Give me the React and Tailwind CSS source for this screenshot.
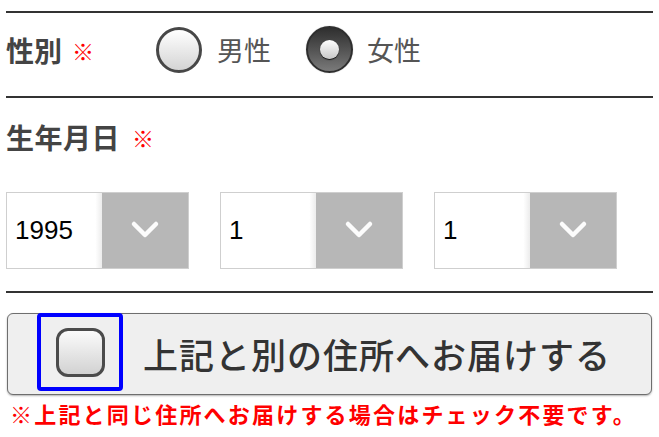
import React from "react";

const JP = { fontFamily: '"Noto Sans CJK JP", "Noto Sans", sans-serif' };

function Select({ value }) {
  return (
    <div className="flex w-[183px] h-[77px] border border-[#cfcfcf] bg-white">
      <div className="flex-1 flex items-center pl-[8px] text-[26px] text-black bg-linear-to-r from-white from-93% to-[#ececec]" style={{ fontFamily: '"Liberation Sans", Arial, sans-serif' }}>
        {value}
      </div>
      <div className="w-[86px] h-full bg-[#b7b7b7] flex items-center justify-center">
        <svg width="30" height="22" viewBox="0 0 30 22" className="mt-[-3px]">
          <polyline points="4,6 15,17 26,6" fill="none" stroke="#fff" strokeWidth="4.5" strokeLinecap="round" strokeLinejoin="round" opacity="0.95" />
        </svg>
      </div>
    </div>
  );
}

export default function App() {
  return (
    <div className="w-[659px] h-[437px] bg-white px-[6px] pt-[11px] overflow-hidden" style={JP}>
      {/* Gender */}
      <div className="border-t-2 border-[#333] h-[85px] pb-[10px] flex items-center">
        <span className="text-[28px] font-bold text-[#444] leading-[40px]">性別</span>
        <span className="text-[22px] text-[#ff0000] ml-[10px] leading-[40px]">※</span>
        <div className="ml-[62px] flex items-center">
          <div className="w-[46px] h-[46px] rounded-full border-[3px] border-[#474747] bg-linear-to-b from-white to-[#d4d4d4]" />
          <span className="ml-[15px] text-[27px] text-[#555] leading-[40px]">男性</span>
          <div className="ml-[35px] w-[47px] h-[47px] rounded-full border-[2px] border-[#2e2e2e] bg-linear-to-b from-[#2f2f2f] to-[#7a7a7a] flex items-center justify-center shadow-[0_0_1px_#999]">
            <div className="w-[19px] h-[19px] rounded-full bg-linear-to-b from-white to-[#c8c8c8] shadow-[0_1px_1px_#111]" />
          </div>
          <span className="ml-[14px] text-[27px] text-[#555] leading-[40px]">女性</span>
        </div>
      </div>

      {/* Birthday */}
      <div className="border-t-2 border-[#333] pt-[19px] pb-[22px]">
        <div className="flex items-center h-[40px]">
          <span className="text-[28px] font-bold text-[#444] tracking-[0.5px]">生年月日</span>
          <span className="text-[22px] text-[#ff0000] ml-[12px]">※</span>
        </div>
        <div className="mt-[35px] flex gap-[31px]">
          <Select value="1995" />
          <Select value="1" />
          <Select value="1" />
        </div>
      </div>

      {/* Checkbox button */}
      <div className="border-t-2 border-[#333] pt-[20px]">
        <div className="ml-[1px] w-[645px] h-[82px] rounded-[6px] border-[1.5px] border-[#6e6e6e] bg-[#efefef] shadow-[0_1px_2px_rgba(0,0,0,0.3)] flex items-start">
          <div className="ml-[29px] mt-[-1px] w-[86px] h-[78px] border-4 border-[#0000ff] rounded-[4px] flex items-center justify-center">
            <div className="w-[49px] h-[49px] rounded-[12px] border-[3px] border-[#4b4b4b] bg-linear-to-b from-[#fbfbfb] to-[#d2d2d2]" />
          </div>
          <span className="self-center ml-[20px] text-[35px] font-medium text-[#333] tracking-[1px] leading-[44px]">上記と別の住所へお届けする</span>
        </div>
        <div className="mt-[5px] pl-[4px] text-[22px] font-bold text-[#ff0000] tracking-[2.2px] leading-[26px] whitespace-nowrap">
          ※上記と同じ住所へお届けする場合はチェック不要です。
        </div>
      </div>
    </div>
  );
}
